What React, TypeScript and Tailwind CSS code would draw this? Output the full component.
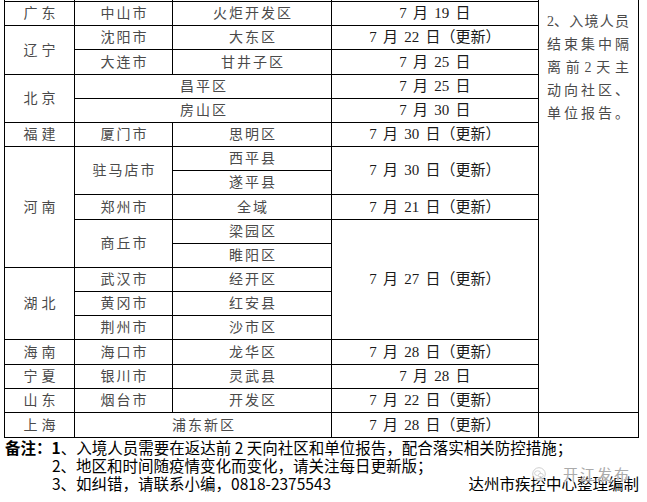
import React from "react";

type CellProps = { cls: string; children?: React.ReactNode };

const Cell = ({ cls, children }: CellProps) => (
  <div className={`flex items-center justify-center border-r border-b border-black whitespace-nowrap ${cls}`}>
    {children}
  </div>
);

const P = "text-[14px] tracking-[4px] pl-[4px] text-[#4a4a4a]";
const T = "text-[14px] tracking-[2px] pl-[2px] text-[#4a4a4a]";
const D = "text-[15px] text-[#1a1a1a] [word-spacing:2.5px]";

const Line = ({ items }: { items: string[] }) => (
  <div className="flex justify-between w-[82px]">
    {items.map((c, i) => (
      <span key={i}>{c}</span>
    ))}
  </div>
);

export default function App() {
  return (
    <div className="w-[647px] h-[502px] bg-white overflow-hidden font-['Liberation_Serif','Noto_Sans_CJK_SC',serif]">
      <div className="ml-[4px] w-[635px] border-l border-black grid grid-cols-[70px_98px_159px_207px_100px] grid-rows-[2px_24px_24px_25px_24px_24px_24px_24px_24px_25px_24px_24px_24px_24px_24px_25px_24px_24px_25px]">
        {/* spacer row */}
        <div className="row-start-1 col-start-1 border-r border-b border-black" />
        <div className="row-start-1 col-start-2 border-r border-b border-black" />
        <div className="row-start-1 col-start-3 border-r border-b border-black" />
        <div className="row-start-1 col-start-4 border-r border-b border-black" />

        {/* right note column */}
        <div className="row-start-1 row-span-18 col-start-5 border-r border-b border-black pt-[10px] pl-[8px] text-[14px] leading-[23px] text-[#4a4a4a]">
          <Line items={["2、", "入", "境", "人", "员"]} />
          <Line items={["结", "束", "集", "中", "隔"]} />
          <Line items={["离", "前", "2", "天", "主"]} />
          <Line items={["动", "向", "社", "区", "、"]} />
          <Line items={["单", "位", "报", "告", "。"]} />
        </div>
        <div className="row-start-19 col-start-5 border-r border-b border-black" />

        {/* 广东 */}
        <Cell cls={`row-start-2 col-start-1 ${P}`}>广东</Cell>
        <Cell cls={`row-start-2 col-start-2 ${T}`}>中山市</Cell>
        <Cell cls={`row-start-2 col-start-3 ${T}`}>火炬开发区</Cell>
        <Cell cls={`row-start-2 col-start-4 ${D}`}>7 月 19 日</Cell>

        {/* 辽宁 */}
        <Cell cls={`row-start-3 row-span-2 col-start-1 ${P}`}>辽宁</Cell>
        <Cell cls={`row-start-3 col-start-2 ${T}`}>沈阳市</Cell>
        <Cell cls={`row-start-3 col-start-3 ${T}`}>大东区</Cell>
        <Cell cls={`row-start-3 col-start-4 ${D}`}>7 月 22 日（更新）</Cell>
        <Cell cls={`row-start-4 col-start-2 ${T}`}>大连市</Cell>
        <Cell cls={`row-start-4 col-start-3 ${T}`}>甘井子区</Cell>
        <Cell cls={`row-start-4 col-start-4 ${D}`}>7 月 25 日</Cell>

        {/* 北京 */}
        <Cell cls={`row-start-5 row-span-2 col-start-1 ${P}`}>北京</Cell>
        <Cell cls={`row-start-5 col-start-2 col-span-2 ${T}`}>昌平区</Cell>
        <Cell cls={`row-start-5 col-start-4 ${D}`}>7 月 25 日</Cell>
        <Cell cls={`row-start-6 col-start-2 col-span-2 ${T}`}>房山区</Cell>
        <Cell cls={`row-start-6 col-start-4 ${D}`}>7 月 30 日</Cell>

        {/* 福建 */}
        <Cell cls={`row-start-7 col-start-1 ${P}`}>福建</Cell>
        <Cell cls={`row-start-7 col-start-2 ${T}`}>厦门市</Cell>
        <Cell cls={`row-start-7 col-start-3 ${T}`}>思明区</Cell>
        <Cell cls={`row-start-7 col-start-4 ${D}`}>7 月 30 日（更新）</Cell>

        {/* 河南 */}
        <Cell cls={`row-start-8 row-span-5 col-start-1 ${P}`}>河南</Cell>
        <Cell cls={`row-start-8 row-span-2 col-start-2 ${T}`}>驻马店市</Cell>
        <Cell cls={`row-start-8 col-start-3 ${T}`}>西平县</Cell>
        <Cell cls={`row-start-9 col-start-3 ${T}`}>遂平县</Cell>
        <Cell cls={`row-start-8 row-span-2 col-start-4 ${D}`}>7 月 30 日（更新）</Cell>
        <Cell cls={`row-start-10 col-start-2 ${T}`}>郑州市</Cell>
        <Cell cls={`row-start-10 col-start-3 ${T}`}>全域</Cell>
        <Cell cls={`row-start-10 col-start-4 ${D}`}>7 月 21 日（更新）</Cell>
        <Cell cls={`row-start-11 row-span-2 col-start-2 ${T}`}>商丘市</Cell>
        <Cell cls={`row-start-11 col-start-3 ${T}`}>梁园区</Cell>
        <Cell cls={`row-start-12 col-start-3 ${T}`}>睢阳区</Cell>
        <Cell cls={`row-start-11 row-span-5 col-start-4 ${D}`}>7 月 27 日（更新）</Cell>

        {/* 湖北 */}
        <Cell cls={`row-start-13 row-span-3 col-start-1 ${P}`}>湖北</Cell>
        <Cell cls={`row-start-13 col-start-2 ${T}`}>武汉市</Cell>
        <Cell cls={`row-start-13 col-start-3 ${T}`}>经开区</Cell>
        <Cell cls={`row-start-14 col-start-2 ${T}`}>黄冈市</Cell>
        <Cell cls={`row-start-14 col-start-3 ${T}`}>红安县</Cell>
        <Cell cls={`row-start-15 col-start-2 ${T}`}>荆州市</Cell>
        <Cell cls={`row-start-15 col-start-3 ${T}`}>沙市区</Cell>

        {/* 海南 */}
        <Cell cls={`row-start-16 col-start-1 ${P}`}>海南</Cell>
        <Cell cls={`row-start-16 col-start-2 ${T}`}>海口市</Cell>
        <Cell cls={`row-start-16 col-start-3 ${T}`}>龙华区</Cell>
        <Cell cls={`row-start-16 col-start-4 ${D}`}>7 月 28 日（更新）</Cell>

        {/* 宁夏 */}
        <Cell cls={`row-start-17 col-start-1 ${P}`}>宁夏</Cell>
        <Cell cls={`row-start-17 col-start-2 ${T}`}>银川市</Cell>
        <Cell cls={`row-start-17 col-start-3 ${T}`}>灵武县</Cell>
        <Cell cls={`row-start-17 col-start-4 ${D}`}>7 月 28 日</Cell>

        {/* 山东 */}
        <Cell cls={`row-start-18 col-start-1 ${P}`}>山东</Cell>
        <Cell cls={`row-start-18 col-start-2 ${T}`}>烟台市</Cell>
        <Cell cls={`row-start-18 col-start-3 ${T}`}>开发区</Cell>
        <Cell cls={`row-start-18 col-start-4 ${D}`}>7 月 22 日（更新）</Cell>

        {/* 上海 */}
        <Cell cls={`row-start-19 col-start-1 ${P}`}>上海</Cell>
        <Cell cls={`row-start-19 col-start-2 col-span-2 ${T}`}>浦东新区</Cell>
        <Cell cls={`row-start-19 col-start-4 ${D}`}>7 月 28 日（更新）</Cell>
      </div>

      <div className="relative pl-[5px] pr-[8px] text-[15.5px] leading-[18px] text-black font-['Noto_Sans_CJK_SC',sans-serif] whitespace-nowrap">
        <div>
          <span className="font-bold">备注：1</span>、入境人员需要在返达前 2 天向社区和单位报告，配合落实相关防控措施；
        </div>
        <div className="pl-[47px]">2、地区和时间随疫情变化而变化，请关注每日更新版；</div>
        <div className="pl-[47px] flex justify-between">
          <span>3、如纠错，请联系小编，0818-2375543</span>
          <span>达州市疾控中心整理编制</span>
        </div>

        <div className="absolute left-[530px] top-[28px] flex items-center gap-[15px] text-[#aaaaaa] text-[15px] leading-[15px] tracking-[2px] [text-shadow:0_0_2px_#fff,0_0_2px_#fff,0_0_1px_#fff]">
          <svg width="18" height="14" viewBox="0 0 18 14" className="opacity-80">
            <circle cx="9" cy="7" r="6.3" fill="white" stroke="#c4c4c4" strokeWidth="1" />
            <ellipse cx="7.6" cy="6.2" rx="3" ry="2.4" fill="none" stroke="#c4c4c4" strokeWidth="0.9" />
            <ellipse cx="10.8" cy="8.4" rx="2.5" ry="2" fill="white" stroke="#c4c4c4" strokeWidth="0.9" />
          </svg>
          <span>开江发布</span>
        </div>
      </div>
    </div>
  );
}
